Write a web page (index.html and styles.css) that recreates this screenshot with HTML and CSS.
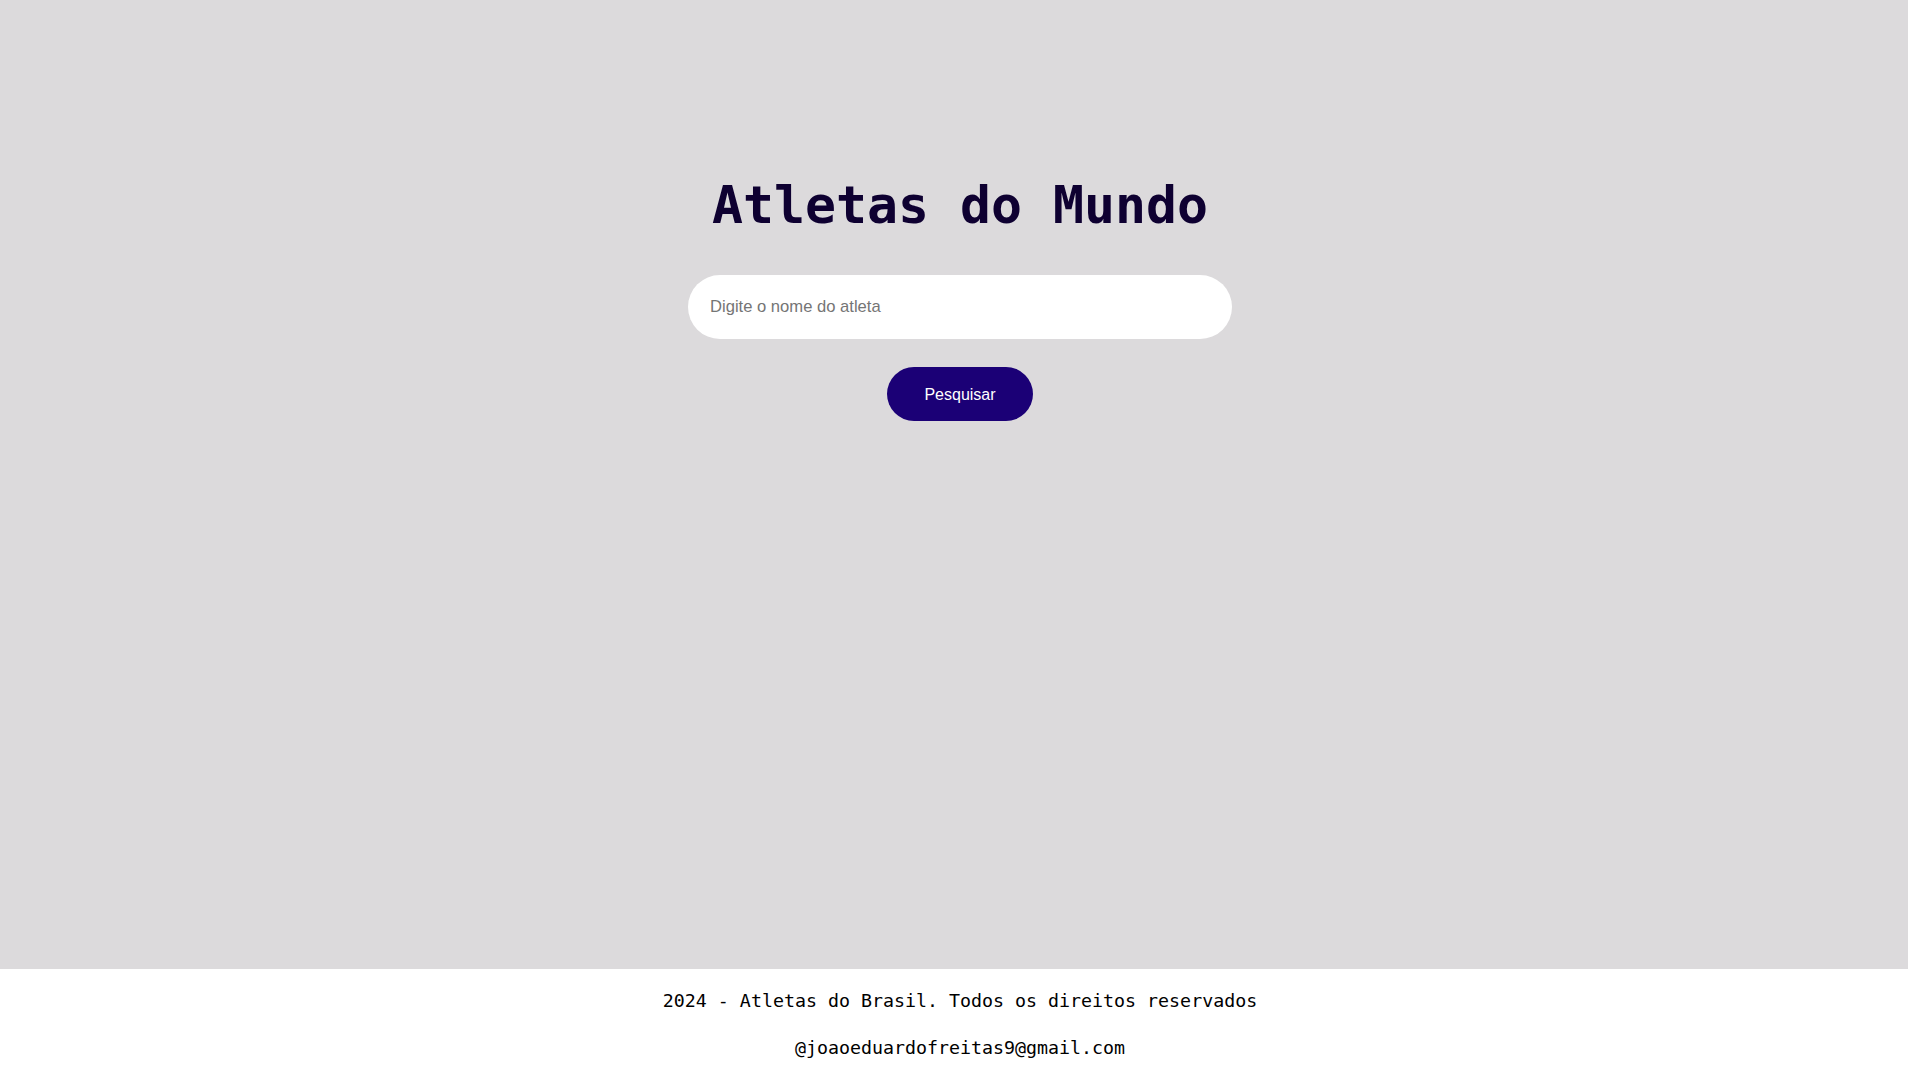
FILE: index.html
```html
<!DOCTYPE html>
<html lang="pt-BR">
<head>
<meta charset="utf-8">
<title>Atletas do Mundo</title>
<link rel="stylesheet" href="styles.css">
</head>
<body>
<main class="main">
  <h1 class="title">Atletas do Mundo</h1>
  <input class="search" type="text" placeholder="Digite o nome do atleta">
  <button class="btn" type="button">Pesquisar</button>
</main>
<footer class="footer">
  <p class="foot-line">2024 - Atletas do Brasil. Todos os direitos reservados</p>
  <p class="foot-line">@joaoeduardofreitas9@gmail.com</p>
</footer>
</body>
</html>
```

FILE: styles.css
```css
html, body {
  margin: 0;
  padding: 0;
}
body {
  min-height: 100vh;
  display: flex;
  flex-direction: column;
  background: #dcdadc;
  font-family: "DejaVu Sans Mono", "Liberation Mono", monospace;
}
.main {
  flex: 1;
  display: flex;
  flex-direction: column;
  align-items: center;
  padding-top: 177px;
  padding-left: 12px;
  box-sizing: border-box;
}
.title {
  margin: 0;
  font-size: 51.5px;
  line-height: 56px;
  font-weight: bold;
  color: #0e0031;
}
.search {
  margin-top: 42px;
  width: 544px;
  height: 64px;
  box-sizing: border-box;
  border: none;
  border-radius: 32px;
  background: #ffffff;
  padding: 0 22px;
  font-family: "Liberation Sans", Arial, sans-serif;
  font-size: 16.6px;
  color: #333;
  outline: none;
}
.search::placeholder {
  color: #757575;
}
.btn {
  margin-top: 28px;
  width: 146px;
  height: 54px;
  border: none;
  border-radius: 27px;
  background: #1b0076;
  color: #ffffff;
  font-family: "Liberation Sans", Arial, sans-serif;
  font-size: 16px;
  padding-top: 2px;
  cursor: pointer;
}
.footer {
  background: #ffffff;
  padding: 20px 0 20px 12px;
  display: flex;
  flex-direction: column;
  align-items: center;
  gap: 23px;
}
.foot-line {
  margin: 0;
  font-size: 18.3px;
  line-height: 24px;
  color: #000000;
}
```
